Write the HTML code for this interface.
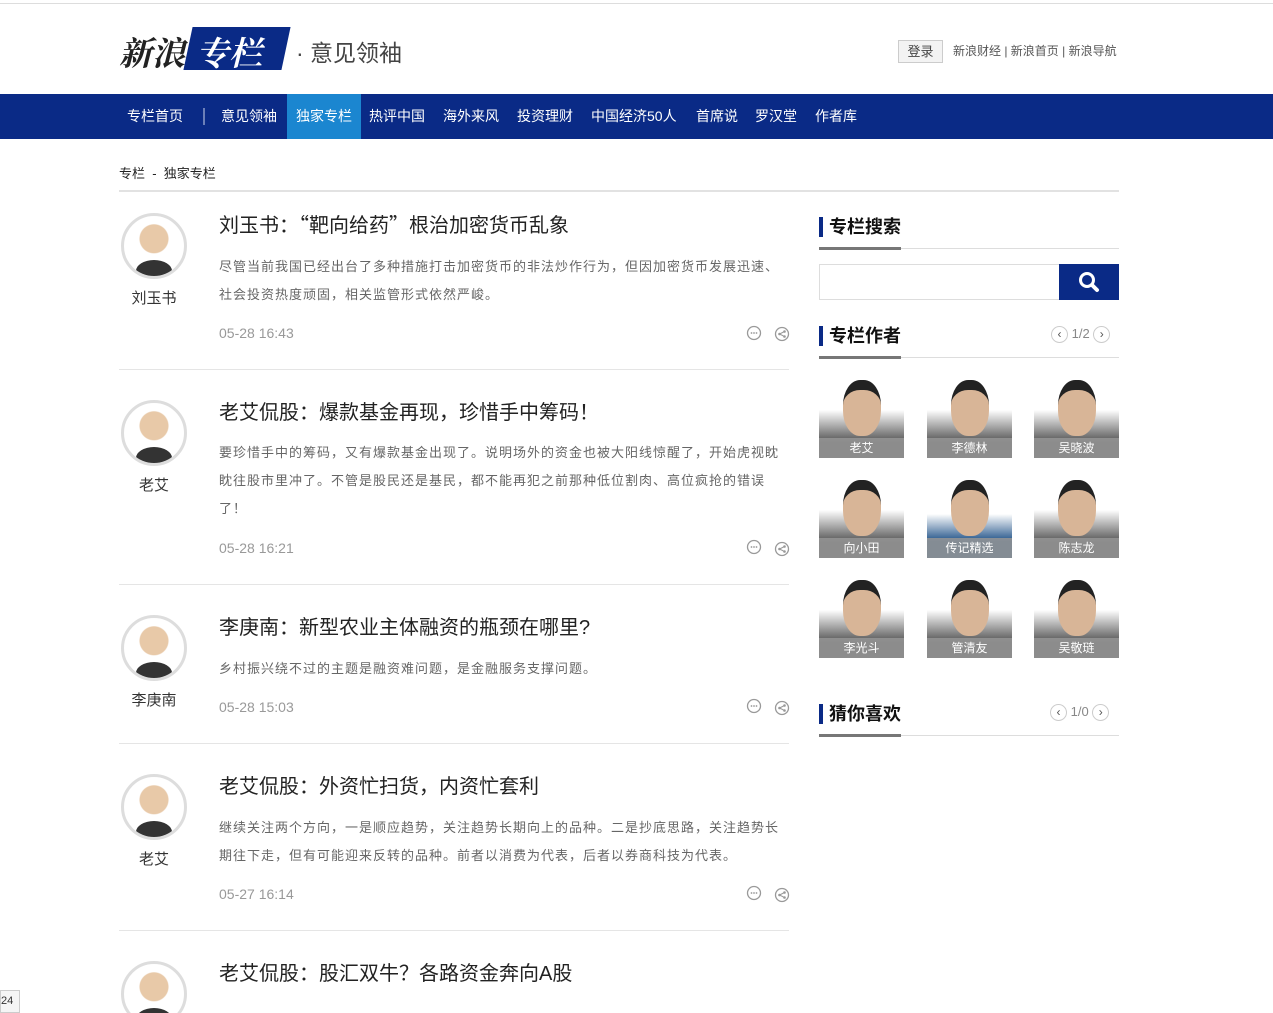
<!DOCTYPE html>
<html><head><meta charset="utf-8"><style>
*{margin:0;padding:0;box-sizing:border-box}
html,body{width:1273px;height:1013px;overflow:hidden}
body{background:#fff;font-family:"Liberation Sans","Noto Sans CJK SC",sans-serif;color:#333;position:relative}
.abs{position:absolute}
.topline{top:3px;left:0;width:1273px;height:1px;background:#ddd}
.nav{top:94px;left:0;width:1273px;height:45px;background:#0a2a86}
.nav a{position:absolute;top:0;height:45px;line-height:45px;color:#fff;font-size:14px;text-decoration:none}
.art .t{position:absolute;left:219px;font-size:20px;color:#222}
.q{font-family:"Noto Sans CJK SC",sans-serif}
.art .d{position:absolute;left:219px;width:566px;font-size:13px;letter-spacing:1px;line-height:28px;color:#666}
.art .tm{position:absolute;left:219px;font-size:14px;color:#999}
.av{position:absolute;left:121px;width:66px;height:66px;border-radius:50%;border:3px solid #ddd;background:radial-gradient(circle at 50% 38%,#e8c9a8 0 14px,#fff 15px);overflow:hidden}
.av:after{content:"";position:absolute;left:12px;bottom:-6px;width:36px;height:22px;border-radius:50% 50% 0 0;background:#333}
.nm{position:absolute;left:121px;width:66px;text-align:center;font-size:15px;color:#333}
.hr{position:absolute;left:119px;width:670px;height:1px;background:#e5e5e5}
.ic{position:absolute}
.h3{position:absolute;left:819px;font-size:18px;font-weight:bold;color:#111;border-left:4px solid #0a2a86;padding-left:6px;line-height:20px}
.ul{position:absolute;left:819px;width:300px;height:1px;background:#ddd}
.ul:before{content:"";position:absolute;left:0;top:-1px;width:82px;height:3px;background:#777}
.ph{position:absolute;width:85px;height:80px;background:linear-gradient(#fff 0 40%,#555 80%);overflow:hidden}
.ph:before{content:"";position:absolute;left:24px;top:2px;width:38px;height:46px;border-radius:45%;background:#d8b597;border-top:10px solid #222}
.ph span{position:absolute;left:0;bottom:0;width:85px;height:20px;background:rgba(150,150,150,.85);color:#fff;font-size:12px;line-height:20px;text-align:center}
.pg{position:absolute;font-size:13px;color:#888}
.pg i{display:inline-block;width:17px;height:17px;border:1px solid #ccc;border-radius:50%;font-style:normal;text-align:center;line-height:15px;font-size:12px;color:#555;vertical-align:middle}
</style></head><body>
<svg width="0" height="0" style="position:absolute"><defs>
<symbol id="cm" viewBox="0 0 16 16"><circle cx="8" cy="8" r="6.5" fill="none" stroke="#999" stroke-width="1.3"/><circle cx="5.5" cy="8" r=".9" fill="#999"/><circle cx="8" cy="8" r=".9" fill="#999"/><circle cx="10.5" cy="8" r=".9" fill="#999"/></symbol>
<symbol id="sh" viewBox="0 0 16 16"><circle cx="8" cy="8" r="6.5" fill="none" stroke="#999" stroke-width="1.3"/><circle cx="10.5" cy="5.5" r="1.3" fill="#999"/><circle cx="5.5" cy="8" r="1.3" fill="#999"/><circle cx="10.5" cy="10.5" r="1.3" fill="#999"/><path d="M10.5 5.5L5.5 8L10.5 10.5" stroke="#999" fill="none"/></symbol>
</defs></svg>
<div class="abs topline"></div>
<div class="abs" style="left:119px;top:28px;font-size:33px;font-weight:bold;font-style:italic;color:#222;font-family:'Liberation Serif','Noto Serif CJK SC',serif">新浪</div>
<div class="abs" style="left:188px;top:27px;width:98px;height:43px;background:#0a2a86;transform:skewX(-12deg)"></div>
<div class="abs" style="left:196px;top:28px;font-size:33px;font-weight:bold;font-style:italic;color:#fff;font-family:'Liberation Serif','Noto Serif CJK SC',serif">专栏</div>
<div class="abs" style="left:296px;top:34px;font-size:23px;color:#444">· 意见领袖</div>
<div class="abs" style="left:898px;top:40px;width:45px;height:23px;border:1px solid #ccc;background:#f3f3f3;font-size:13px;line-height:21px;text-align:center;color:#444">登录</div>
<div class="abs" style="left:953px;top:42px;font-size:12px;color:#555">新浪财经 | 新浪首页 | 新浪导航</div>
<div class="abs nav">
<a style="left:127px">专栏首页</a>
<div style="position:absolute;left:203px;top:14px;width:2px;height:17px;background:#6b7fb8"></div>
<a style="left:221px">意见领袖</a>
<a style="left:287px;width:74px;background:#1b86d0;text-align:center">独家专栏</a>
<a style="left:369px">热评中国</a>
<a style="left:443px">海外来风</a>
<a style="left:517px">投资理财</a>
<a style="left:591px">中国经济50人</a>
<a style="left:696px">首席说</a>
<a style="left:755px">罗汉堂</a>
<a style="left:815px">作者库</a>
</div>
<div class="abs" style="left:119px;top:163px;font-size:13px;color:#222">专栏 &nbsp;-&nbsp; 独家专栏</div>
<div class="abs" style="left:119px;top:190px;width:1000px;height:2px;background:#e2e2e2"></div>

<div class="art">
<div class="av" style="top:213px"></div><div class="nm" style="top:287px">刘玉书</div>
<div class="t" style="top:209px">刘玉书：<span class="q">“</span>靶向给药<span class="q">”</span>根治加密货币乱象</div>
<div class="d" style="top:253px">尽管当前我国已经出台了多种措施打击加密货币的非法炒作行为，但因加密货币发展迅速、社会投资热度顽固，相关监管形式依然严峻。</div>
<div class="tm" style="top:325px">05-28 16:43</div>
<svg class="ic" style="left:746px;top:325px" width="16" height="16"><use href="#cm"/></svg><svg class="ic" style="left:774px;top:326px" width="16" height="16"><use href="#sh"/></svg>
<div class="hr" style="top:369px"></div>

<div class="av" style="top:400px"></div><div class="nm" style="top:474px">老艾</div>
<div class="t" style="top:396px">老艾侃股：爆款基金再现，珍惜手中筹码！</div>
<div class="d" style="top:439px">要珍惜手中的筹码，又有爆款基金出现了。说明场外的资金也被大阳线惊醒了，开始虎视眈眈往股市里冲了。不管是股民还是基民，都不能再犯之前那种低位割肉、高位疯抢的错误了！</div>
<div class="tm" style="top:540px">05-28 16:21</div>
<svg class="ic" style="left:746px;top:539px" width="16" height="16"><use href="#cm"/></svg><svg class="ic" style="left:774px;top:541px" width="16" height="16"><use href="#sh"/></svg>
<div class="hr" style="top:584px"></div>

<div class="av" style="top:615px"></div><div class="nm" style="top:689px">李庚南</div>
<div class="t" style="top:611px">李庚南：新型农业主体融资的瓶颈在哪里?</div>
<div class="d" style="top:655px">乡村振兴绕不过的主题是融资难问题，是金融服务支撑问题。</div>
<div class="tm" style="top:699px">05-28 15:03</div>
<svg class="ic" style="left:746px;top:698px" width="16" height="16"><use href="#cm"/></svg><svg class="ic" style="left:774px;top:700px" width="16" height="16"><use href="#sh"/></svg>
<div class="hr" style="top:743px"></div>

<div class="av" style="top:774px"></div><div class="nm" style="top:848px">老艾</div>
<div class="t" style="top:770px">老艾侃股：外资忙扫货，内资忙套利</div>
<div class="d" style="top:814px">继续关注两个方向，一是顺应趋势，关注趋势长期向上的品种。二是抄底思路，关注趋势长期往下走，但有可能迎来反转的品种。前者以消费为代表，后者以券商科技为代表。</div>
<div class="tm" style="top:886px">05-27 16:14</div>
<svg class="ic" style="left:746px;top:885px" width="16" height="16"><use href="#cm"/></svg><svg class="ic" style="left:774px;top:887px" width="16" height="16"><use href="#sh"/></svg>
<div class="hr" style="top:930px"></div>

<div class="av" style="top:961px"></div>
<div class="t" style="top:957px">老艾侃股：股汇双牛？各路资金奔向A股</div>
</div>

<div class="h3" style="top:217px">专栏搜索</div>
<div class="ul" style="top:248px"></div>
<div class="abs" style="left:819px;top:264px;width:241px;height:36px;border:1px solid #ddd"></div>
<div class="abs" style="left:1059px;top:264px;width:60px;height:36px;background:#0a2a86">
<svg width="60" height="36" viewBox="0 0 60 36"><circle cx="28" cy="16" r="6.5" stroke="#fff" stroke-width="3" fill="none"/><line x1="33" y1="21" x2="38" y2="26" stroke="#fff" stroke-width="4" stroke-linecap="round"/></svg></div>

<div class="h3" style="top:326px">专栏作者</div>
<div class="pg" style="left:1051px;top:326px"><i>‹</i> 1/2 <i>›</i></div>
<div class="ul" style="top:357px"></div>

<div class="ph" style="left:819px;top:378px"><span>老艾</span></div>
<div class="ph" style="left:927px;top:378px"><span>李德林</span></div>
<div class="ph" style="left:1034px;top:378px"><span>吴晓波</span></div>
<div class="ph" style="left:819px;top:478px"><span>向小田</span></div>
<div class="ph" style="left:927px;top:478px;background:linear-gradient(#fff 0 45%,#1c4f86 80%)"><span>传记精选</span></div>
<div class="ph" style="left:1034px;top:478px"><span>陈志龙</span></div>
<div class="ph" style="left:819px;top:578px"><span>李光斗</span></div>
<div class="ph" style="left:927px;top:578px"><span>管清友</span></div>
<div class="ph" style="left:1034px;top:578px"><span>吴敬琏</span></div>

<div class="h3" style="top:704px">猜你喜欢</div>
<div class="pg" style="left:1050px;top:704px"><i>‹</i> 1/0 <i>›</i></div>
<div class="ul" style="top:735px"></div>

<div class="abs" style="left:0;top:990px;width:20px;height:23px;border:1px solid #ccc;background:#f5f5f5;font-size:11px;line-height:21px;color:#333">24</div>
</body></html>
